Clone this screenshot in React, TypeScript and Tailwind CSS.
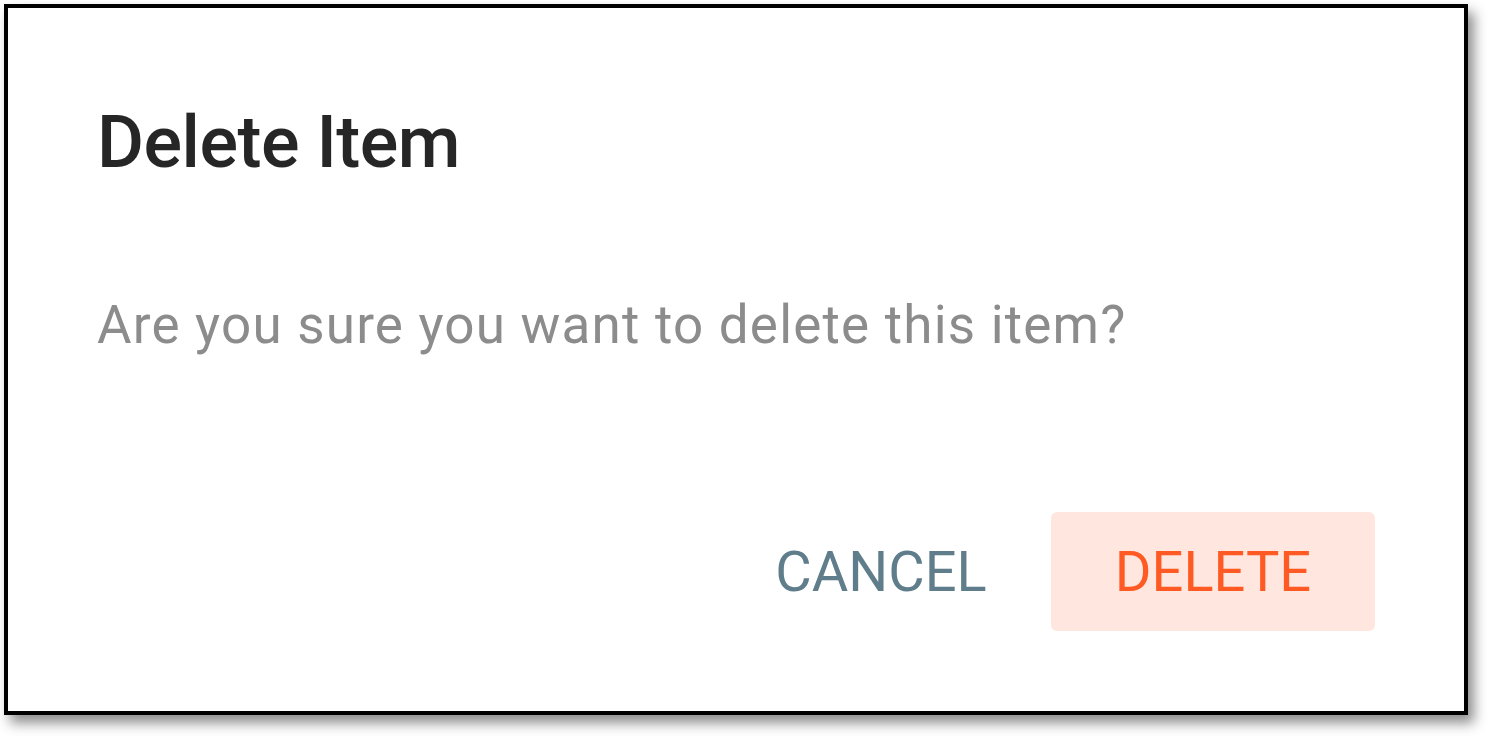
import React from 'react';

export default function App() {
  return (
    <div className="w-[1488px] h-[736px] bg-white pt-[4px] pl-[4px]" style={{ fontFamily: 'Roboto, "Liberation Sans", sans-serif' }}>
      <div className="w-[1464px] h-[711px] border-[4px] border-black bg-white shadow-[6px_8px_12px_rgba(0,0,0,0.45)] flex flex-col px-[89px]">
        <h2 className="mt-[99px] text-[72px] leading-none font-medium text-[#262626] tracking-[-0.5px]">Delete Item</h2>
        <p className="mt-[120px] text-[53px] leading-none text-[#8c8c8c] tracking-[1.2px]">Are you sure you want to delete this item?</p>
        <div className="mt-auto mb-[80px] flex justify-end gap-[8px]">
          <button className="w-[324px] h-[119px] rounded-[6px] text-[56px] leading-none text-[#607d8b]">CANCEL</button>
          <button className="w-[324px] h-[119px] rounded-[6px] bg-[#ffe7df] text-[56px] leading-none text-[#ff5a24]">DELETE</button>
        </div>
      </div>
    </div>
  );
}
